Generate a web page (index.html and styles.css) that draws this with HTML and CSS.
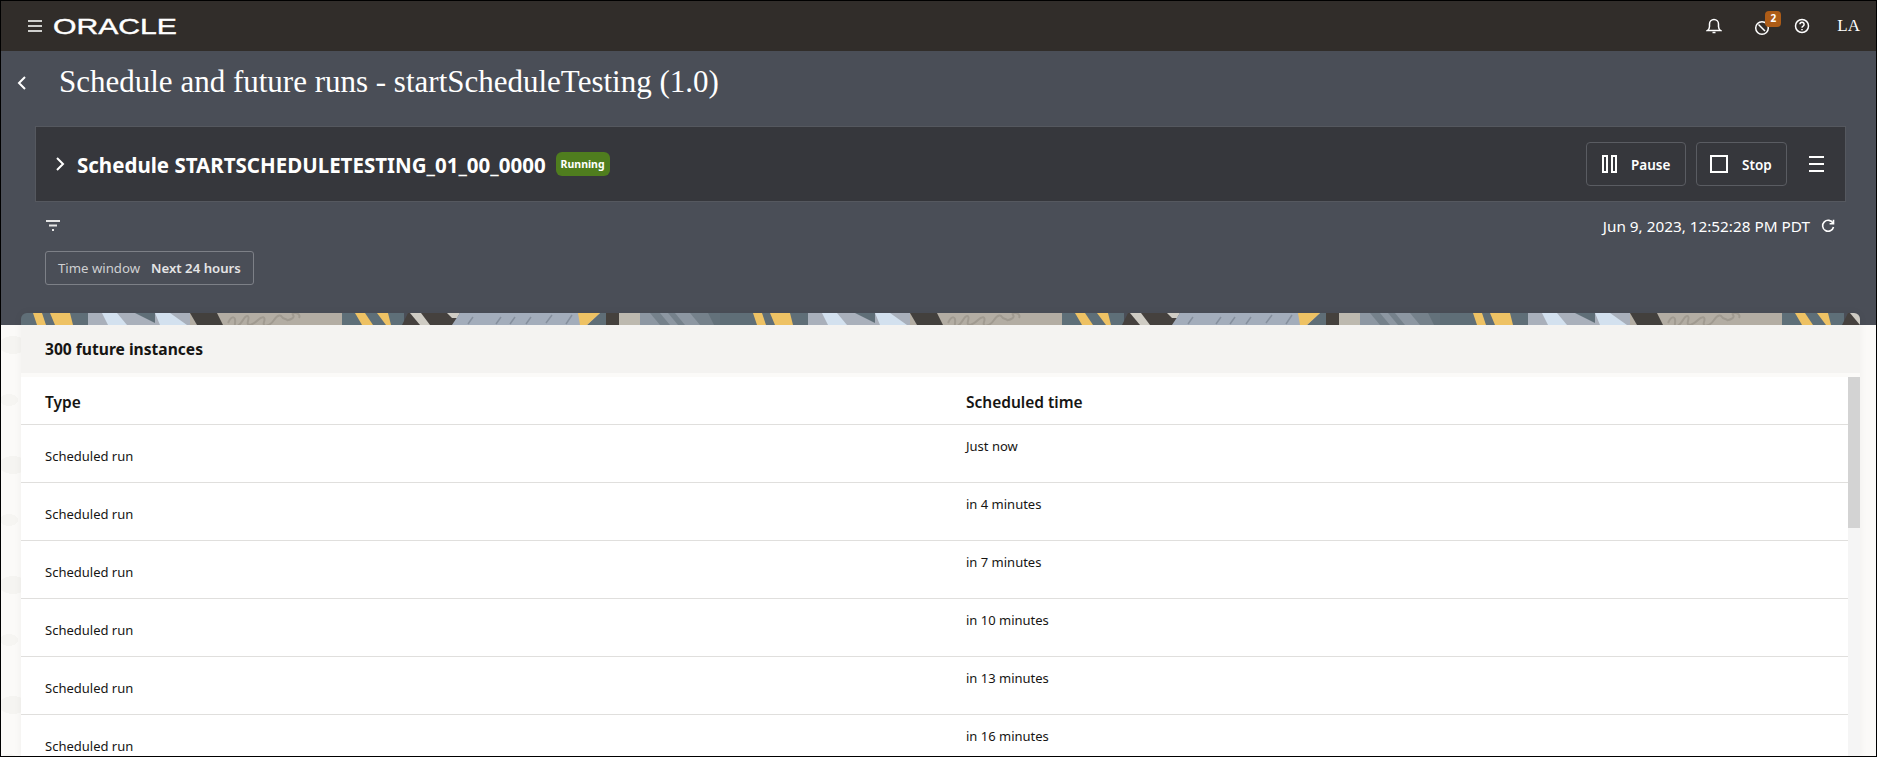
FILE: index.html
```html
<!DOCTYPE html>
<html lang="en">
<head>
    <meta charset="UTF-8">
    <title>Schedule and future runs</title>
    <link rel="stylesheet" href="styles.css">
</head>
<body>
<div class="app">
    <!-- top bar -->
    <header class="topbar">
        <svg class="menu_icon" width="14" height="12" viewBox="0 0 14 12"><path d="M0 1h14M0 6h14M0 11h14" stroke="#cfcfcd" stroke-width="2"/></svg>
        <svg class="logo" width="124" height="24" viewBox="0 0 124 24"><text x="0" y="20" textLength="124" lengthAdjust="spacingAndGlyphs">ORACLE</text></svg>
        <div class="top_icons">
            <svg class="bell" width="16" height="16" viewBox="0 0 16 16" fill="none" stroke="#fff" stroke-width="1.5"><path d="M1.5 12.5c1.5-1 2-2 2-4V6a4.500 4.500 0 0 1 9 0v2.500c0 2 .5 3 2 4z"/><path d="M6.500 14.500h3"/></svg>
            <div class="clock">
                <svg width="16" height="16" viewBox="0 0 16 16" fill="none" stroke="#fff" stroke-width="1.5"><circle cx="8" cy="8" r="6.300"/><path d="M4.500 4.500L8 8l3 3"/></svg>
                <span class="count">2</span>
            </div>
            <svg class="help" width="16" height="16" viewBox="0 0 16 16" fill="none" stroke="#fff" stroke-width="1.500"><circle cx="8" cy="8" r="6.500"/><path d="M5.900 6.300a2.100 2.100 0 1 1 3.200 1.800c-.8.500-1.100.9-1.100 1.700"/><path d="M8 11v1.300"/></svg>
            <span class="user">LA</span>
        </div>
    </header>

    <!-- dark part of the page -->
    <section class="dark">
        <div class="page_title">
            <svg class="back" width="10" height="14" viewBox="0 0 10 14" fill="none" stroke="#fff" stroke-width="2"><path d="M8 1L2 7l6 6"/></svg>
            <h1>Schedule and future runs - startScheduleTesting (1.0)</h1>
        </div>

        <div class="panel">
            <svg class="arrow" width="10" height="14" viewBox="0 0 10 14" fill="none" stroke="#fff" stroke-width="2"><path d="M2 1l6 6-6 6"/></svg>
            <h2>Schedule STARTSCHEDULETESTING_01_00_0000</h2>
            <span class="badge">Running</span>
            <div class="actions">
                <a class="btn btn_pause" href="javascript:;">
                    <svg width="15" height="18" viewBox="0 0 15 18" fill="none" stroke="#fff" stroke-width="2"><rect x="1" y="1" width="4" height="16"/><rect x="10" y="1" width="4" height="16"/></svg>
                    <span>Pause</span>
                </a>
                <a class="btn btn_stop" href="javascript:;">
                    <svg width="18" height="18" viewBox="0 0 18 18" fill="none" stroke="#fff" stroke-width="2"><rect x="1" y="1" width="16" height="16"/></svg>
                    <span>Stop</span>
                </a>
                <svg class="more" width="15" height="16" viewBox="0 0 15 16"><path d="M0 1h15M0 8h15M0 15h15" stroke="#fff" stroke-width="2"/></svg>
            </div>
        </div>

        <div class="toolbar">
            <svg width="14" height="11" viewBox="0 0 14 11"><path d="M0 1h14M3 5.500h8M6 10h2" stroke="#e6e6e6" stroke-width="2"/></svg>
            <div class="stamp">
                <span>Jun 9, 2023, 12:52:28 PM PDT</span>
                <svg width="14" height="14" viewBox="0 0 14 14" fill="none" stroke="#fff" stroke-width="1.600"><path d="M12 4.200A5.500 5.500 0 1 0 12.500 8"/><path d="M12.500 .8v3.900H8.600"/></svg>
            </div>
        </div>

        <div class="chip"><span class="chip_label">Time window</span><span class="chip_value">Next 24 hours</span></div>
    </section>

    <!-- light part with the results -->
    <section class="light">
        <div class="card">
            <svg class="banner" width="100%" height="12">
                <defs>
                    <pattern id="strip" x="-21" y="0" width="720" height="12" patternUnits="userSpaceOnUse">
                        <rect width="88" height="12" fill="#5f6e77"/>
                        <polygon points="33,0 42,0 46,12 37,12" fill="#eec264"/>
                        <polygon points="50,0 70,0 73,12 55,12" fill="#eec264"/>
                        <rect x="88" width="105" height="12" fill="#a9b0bb"/>
                        <polygon points="102,0 117,0 127,12 108,12" fill="#d3e1ef"/>
                        <polygon points="135,0 155,0 155,10" fill="#5f6e77"/>
                        <polygon points="155,0 170,0 187,12 160,12" fill="#d3e1ef"/>
                        <rect x="190" width="155" height="12" fill="#b3ada3"/>
                        <polygon points="190,0 217,0 223,12 197,12" fill="#43403d"/>
                        <path d="M228 10c4-8 8-7 7 0s5 2 8-3 7-6 5 1 6 3 10-1 8-4 6 2 6 4 10-2 7-5 8-3 5 2 5 3 9-2 6-5 9-3 6 3" fill="none" stroke="#a09a90" stroke-width="2"/>
                        <rect x="342" width="62" height="12" fill="#5e6f78"/>
                        <polygon points="355,0 365,0 373,12 362,12" fill="#eec264"/>
                        <polygon points="377,0 388,0 391,12 386,12" fill="#eec264"/>
                        <polygon points="408,0 460,0 452,12 402,12" fill="#45413e"/>
                        <polygon points="410,0 421,0 430,12 420,12" fill="#cfccc4"/>
                        <polygon points="447,0 460,0 457,5 452,5" fill="#cfccc4"/>
                        <polygon points="460,0 606,0 606,12 452,12" fill="#a3adbb"/>
                        <path d="M468 11l5-7M496 11l5-7M510 11l5-7M526 11l5-7M546 10l6-8M566 11l6-9" stroke="#858f9d" stroke-width="1.500"/>
                        <polygon points="587,12 600,0 606,0 606,12" fill="#5f6e77"/>
                        <polygon points="578,0 600,0 587,12 580,12" fill="#eec264"/>
                        <rect x="606" width="13" height="12" fill="#45413d"/>
                        <rect x="619" width="21" height="12" fill="#bdb9af"/>
                        <rect x="640" width="80" height="12" fill="#8d97a2"/>
                        <polygon points="650,0 660,0 670,12 660,12" fill="#75818b"/>
                        <polygon points="668,0 675,0 685,12 678,12" fill="#75818b"/>
                        <polygon points="690,0 712,0 720,12 700,12" fill="#75818b"/>
                        <polygon points="708,0 720,0 720,12 714,12" fill="#63717a"/>
                    </pattern>
                </defs>
                <rect width="100%" height="12" fill="url(#strip)"/>
            </svg>
            <div class="card_head">300 future instances</div>
            <div class="table_wrap">
                <div class="table">
                    <div class="row row_head"><div>Type</div><div>Scheduled time</div></div>
                    <div class="row"><div class="type">Scheduled run</div><div class="time">Just now</div></div>
                    <div class="row"><div class="type">Scheduled run</div><div class="time">in 4 minutes</div></div>
                    <div class="row"><div class="type">Scheduled run</div><div class="time">in 7 minutes</div></div>
                    <div class="row"><div class="type">Scheduled run</div><div class="time">in 10 minutes</div></div>
                    <div class="row"><div class="type">Scheduled run</div><div class="time">in 13 minutes</div></div>
                    <div class="row"><div class="type">Scheduled run</div><div class="time">in 16 minutes</div></div>
                </div>
                <div class="scroll"><div class="thumb"></div></div>
            </div>
        </div>
    </section>
</div>
</body>
</html>
```

FILE: styles.css
```css
*{
    margin: 0;
    padding: 0;
    box-sizing: border-box;
}
body{
    font-family: "Noto Sans", "Open Sans", sans-serif;
    color: #161513;
}
a{
    color: #fff;
    text-decoration: none;
}
.app{
    height: 757px;
    border: 1px solid #000;
    display: flex;
    flex-direction: column;
    overflow: hidden;
}

/* top bar */
.topbar{
    height: 50px;
    flex: none;
    background-color: #312d2a;
    display: flex;
    align-items: center;
    padding-left: 27px;
}
.logo{
    margin-left: 11px;
}
.logo text{
    font-family: "Liberation Sans", sans-serif;
    font-size: 22px;
    fill: #fff;
    stroke: #fff;
    stroke-width: 0.4px;
}
.top_icons{
    margin-left: auto;
    display: flex;
    align-items: center;
    padding-right: 16px;
}
.bell{
    margin-right: 32px;
}
.clock{
    position: relative;
    margin-right: 24px;
    height: 16px;
    top: 1px;
}
.count{
    position: absolute;
    left: 11px;
    top: -8px;
    width: 16px;
    height: 16px;
    border-radius: 4px;
    background-color: #ad5c17;
    color: #fff;
    font-size: 10px;
    font-weight: 700;
    line-height: 15px;
    text-align: center;
}
.help{
    margin-right: 27px;
}
.user{
    font-family: "Liberation Serif", serif;
    font-size: 17px;
    color: #fff;
}

/* dark area */
.dark{
    flex: none;
    height: 274px;
    background-color: #4a4e57;
}
.page_title{
    height: 75px;
    display: flex;
    align-items: center;
    padding-left: 16px;
    color: #fff;
}
.page_title .back{
    margin-top: -12px;
}
.page_title h1{
    font-family: "Liberation Serif", serif;
    font-size: 31px;
    font-weight: 400;
    margin-left: 32px;
    margin-top: -14px;
}
.panel{
    height: 76px;
    margin: 0 30px 0 34px;
    background-color: #36373c;
    border: 1px solid #55585f;
    display: flex;
    align-items: center;
    padding-left: 19px;
    color: #fff;
}
.panel h2{
    font-size: 20.5px;
    font-weight: 700;
    margin-left: 12px;
    margin-top: 1px;
}
.badge{
    margin-left: 10px;
    height: 24px;
    padding: 0 5px;
    border-radius: 6px;
    background-color: #4f7d1e;
    font-size: 10.5px;
    font-weight: 700;
    line-height: 25px;
}
.actions{
    margin-left: auto;
    display: flex;
    align-items: center;
    padding-right: 21px;
}
.btn{
    height: 44px;
    display: flex;
    align-items: center;
    border: 1px solid #5a5c62;
    border-radius: 4px;
    font-size: 13.5px;
    font-weight: 600;
    padding-left: 15px;
}
.btn span{
    margin-top: 2px;
}
.btn svg{
    margin-right: 14px;
}
.btn_pause{
    width: 100px;
    margin-right: 10px;
}
.btn_stop{
    width: 91px;
    padding-left: 13px;
    margin-right: 22px;
}
.toolbar{
    height: 47px;
    display: flex;
    align-items: center;
    justify-content: space-between;
    padding: 0 41px 0 45px;
}
.stamp{
    display: flex;
    align-items: center;
    color: #fff;
    font-size: 15.3px;
}
.stamp svg{
    margin-left: 11px;
}
.chip{
    width: 209px;
    height: 34px;
    margin-left: 44px;
    margin-top: 2px;
    border: 1px solid #7d8087;
    border-radius: 3px;
    display: flex;
    align-items: center;
    padding-left: 12px;
    font-size: 13.2px;
}
.chip_label{
    color: #cfd0d2;
}
.chip_value{
    color: #e4e4e5;
    font-weight: 600;
    margin-left: 11px;
}

/* light area */
.light{
    flex: 1;
    min-height: 0;
    padding: 0 16px 0 20px;
    background-color: #fbfaf8;
    background-image:
        radial-gradient(ellipse 14px 9px at 12px 20px, #f5f4f1 98%, transparent),
        radial-gradient(ellipse 9px 6px at 8px 75px, #f6f5f2 98%, transparent);
    background-size: 1877px 120px;
}
.card{
    margin-top: -12px;
    height: 444px;
    display: flex;
    flex-direction: column;
    border-radius: 6px 6px 0 0;
    overflow: hidden;
    box-shadow: 0 0 8px rgba(0,0,0,0.05);
}
.banner{
    display: block;
    flex: none;
}
.card_head{
    flex: none;
    height: 48px;
    background-color: #f4f3f1;
    padding-left: 24px;
    font-size: 15.6px;
    font-weight: 700;
    line-height: 49px;
    margin-bottom: 4px;
}
.table_wrap{
    flex: 1;
    min-height: 0;
    display: flex;
    background-color: #fff;
}
.table{
    flex: 1;
}
.row{
    height: 58px;
    display: grid;
    grid-template-columns: 921px 1fr;
    padding-left: 24px;
    border-top: 1px solid #e0dfdd;
    font-size: 13px;
}
.row_head{
    height: 47px;
    border-top: none;
    align-items: center;
    font-size: 15.5px;
    font-weight: 600;
    padding-top: 2px;
}
.type{
    align-self: center;
    padding-top: 4px;
}
.time{
    padding-top: 12px;
}
.scroll{
    width: 12px;
    background-color: #f5f5f5;
}
.thumb{
    height: 151px;
    background-color: #d3d3d3;
}
```
